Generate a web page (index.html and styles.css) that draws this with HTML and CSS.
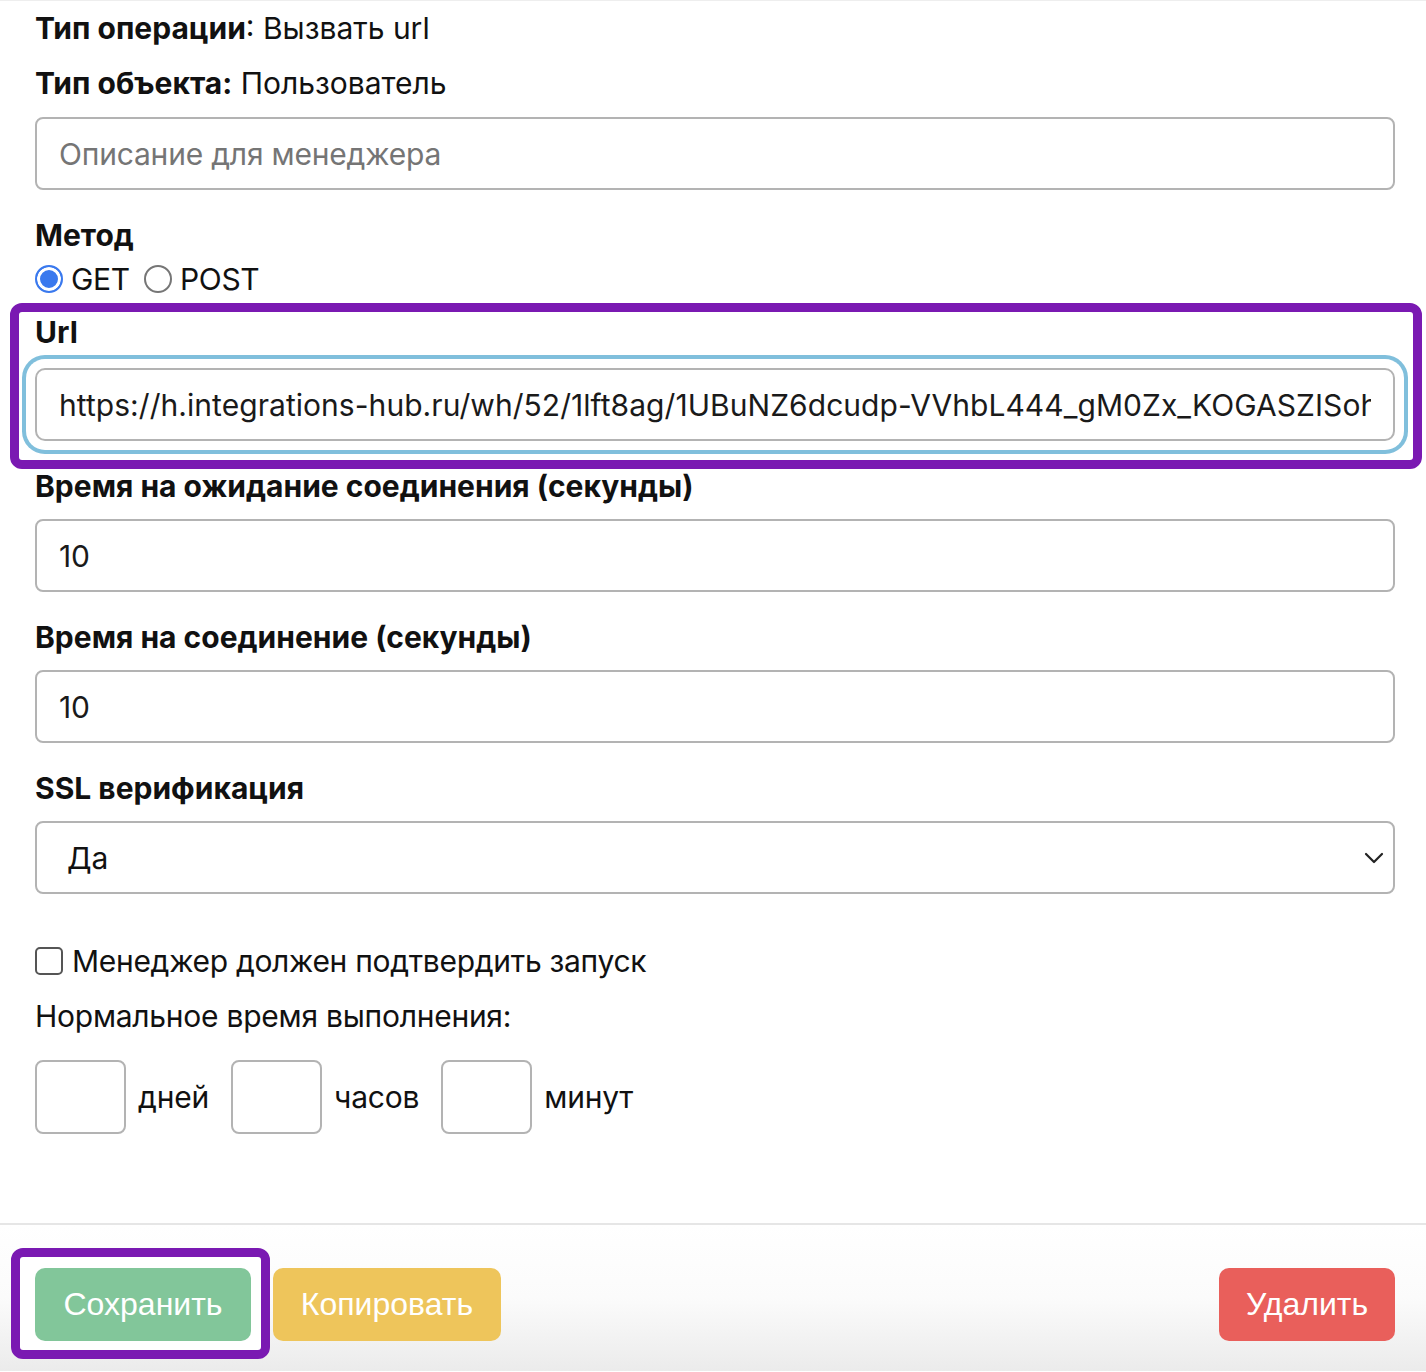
FILE: index.html
```html
<!DOCTYPE html>
<html lang="ru">

<head>
    <meta charset="UTF-8">
    <meta name="viewport" content="width=device-width, initial-scale=1.0">
    <title>Операция</title>
    <link rel="stylesheet" href="styles.css">
</head>

<body>

    <div class="form-body">
        <p class="info"><b>Тип операции</b>: Вызвать url</p>
        <p class="info"><b>Тип объекта:</b> Пользователь</p>

        <input class="field desc" type="text" placeholder="Описание для менеджера">

        <div class="label method-label">Метод</div>
        <div class="radios">
            <label><input type="radio" name="method" checked> GET</label>
            <label><input type="radio" name="method"> POST</label>
        </div>

        <div class="highlight url-group">
            <div class="label">Url</div>
            <input class="field focused" type="text"
                value="https://h.integrations-hub.ru/wh/52/1lft8ag/1UBuNZ6dcudp-VVhbL444_gM0Zx_KOGASZISoh3kQ">
        </div>

        <div class="label after-url">Время на ожидание соединения (секунды)</div>
        <input class="field" type="text" value="10">

        <div class="label">Время на соединение (секунды)</div>
        <input class="field" type="text" value="10">

        <div class="label">SSL верификация</div>
        <div class="select">
            <span>Да</span>
            <svg width="20" height="12" viewBox="0 0 20 12">
                <path d="M2 2 L10 10 L18 2" fill="none" stroke="#222" stroke-width="2.2" stroke-linecap="round" stroke-linejoin="round"/>
            </svg>
        </div>

        <label class="check"><input type="checkbox"> Менеджер должен подтвердить запуск</label>

        <div class="plain">Нормальное время выполнения:</div>

        <div class="duration">
            <input class="field small" type="text"><span>дней</span>
            <input class="field small" type="text"><span>часов</span>
            <input class="field small" type="text"><span>минут</span>
        </div>
    </div>

    <div class="footer">
        <span class="highlight save-wrap"><button class="btn green">Сохранить</button></span>
        <button class="btn yellow">Копировать</button>
        <button class="btn red push">Удалить</button>
    </div>

</body>

</html>
```

FILE: styles.css
```css
body {
    margin: 0;
    font-family: Inter, "Noto Sans", sans-serif;
    color: #111;
    background-color: white;
    border-top: 1px solid #eee;
}

.form-body {
    padding: 0 31px 0 35px;
    height: 1222px;
    display: flex;
    flex-direction: column;
    align-items: flex-start;
}

.info {
    margin: 0;
    font-size: 30px;
    line-height: 55px;
    letter-spacing: 0;
}

.info b {
    font-weight: 700;
}

.label {
    font-size: 30px;
    font-weight: 700;
    line-height: 40px;
    margin-top: 25px;
    margin-bottom: 13px;
}

.field {
    box-sizing: border-box;
    width: 100%;
    height: 73px;
    border: 2px solid #b3b3b3;
    border-radius: 8px;
    padding: 0 22px;
    font-family: Inter, sans-serif;
    font-size: 30px;
    letter-spacing: -0.2px;
    color: #1a1a1a;
    background: white;
    outline: none;
}

.field::placeholder {
    color: #757575;
}

.desc {
    margin-top: 6px;
}

.method-label {
    margin-bottom: 4px;
}

.radios {
    display: flex;
    gap: 14px;
    font-size: 30px;
    line-height: 40px;
    letter-spacing: -0.3px;
}

.radios label {
    display: flex;
    align-items: center;
    gap: 8px;
}

.radios input {
    appearance: none;
    margin: 0;
    width: 28px;
    height: 28px;
    border-radius: 50%;
    border: 2px solid #767676;
    box-sizing: border-box;
}

.radios input:checked {
    border-color: #3a79ee;
    background-color: #3a79ee;
    box-shadow: inset 0 0 0 3px white;
}

.highlight {
    outline: 9px solid #7a19b2;
    border-radius: 3px;
}

.url-group {
    align-self: stretch;
    margin: 13px -18px 0 -16px;
    padding: 0 18px 19px 16px;
}

.url-group .label {
    margin-top: 0;
    margin-bottom: 16px;
}

.focused {
    box-shadow: 0 0 0 9px white, 0 0 0 13px #80bfdc;
    border-radius: 10px;
    letter-spacing: 0.05px;
}

.label.after-url {
    margin-top: 6px;
}

.select {
    box-sizing: border-box;
    width: 100%;
    height: 73px;
    border: 2px solid #b3b3b3;
    border-radius: 8px;
    padding: 0 9px 0 30px;
    display: flex;
    align-items: center;
    justify-content: space-between;
    font-size: 30px;
}

.check {
    margin-top: 47px;
    display: flex;
    align-items: center;
    gap: 9px;
    font-size: 30px;
    line-height: 40px;
    letter-spacing: -0.3px;
}

.check input {
    appearance: none;
    margin: 0;
    width: 28px;
    height: 28px;
    border: 2px solid #555;
    border-radius: 5px;
    box-sizing: border-box;
}

.plain {
    margin-top: 15px;
    font-size: 30px;
    line-height: 40px;
    letter-spacing: -0.25px;
}

.duration {
    margin-top: 24px;
    display: flex;
    align-items: center;
    font-size: 30px;
    letter-spacing: -0.2px;
}

.field.small {
    width: 91px;
    height: 74px;
    margin-right: 12px;
}

.duration span {
    margin-right: 22px;
}

.footer {
    border-top: 2px solid #e6e6e6;
    height: 148px;
    box-sizing: border-box;
    padding: 43px 31px 0 35px;
    display: flex;
    align-items: flex-start;
    background: linear-gradient(#fff 0%, #fbfbfb 50%, #ebebeb 100%);
}

.btn {
    height: 73px;
    border: none;
    border-radius: 10px;
    padding: 0 20px;
    font-family: "Liberation Sans", Arial, sans-serif;
    font-size: 32px;
    color: white;
}

.save-wrap {
    display: inline-flex;
    margin: -11px 12px 0 -15px;
    padding: 11px 10px 9px 15px;
    background: white;
}

.green {
    background-color: #82c69a;
    width: 216px;
}

.yellow {
    background-color: #eec55b;
    width: 228px;
}

.red {
    background-color: #e95f5b;
    width: 176px;
}

.push {
    margin-left: auto;
}
```
